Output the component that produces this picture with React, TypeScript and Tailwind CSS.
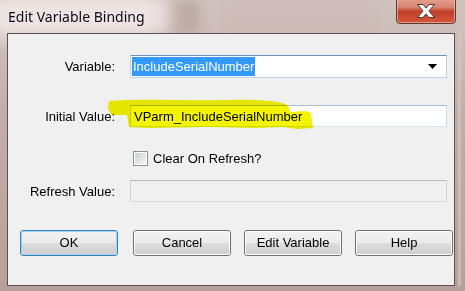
const label = 'text-[13px] text-black leading-none';
const ui = { fontFamily: '"Liberation Sans", Arial, sans-serif' };

function Button({ children, primary, className }: { children: string; primary?: boolean; className?: string }) {
  return (
    <div
      className={`relative h-[26px] w-[98px] rounded-[3px] border ${
        primary ? 'border-[#3c7fb1]' : 'border-[#707070]'
      } ${className ?? ''}`}
    >
      <div
        className={`flex h-full w-full items-center justify-center rounded-[2px] border ${
          primary ? 'border-[#9cd6f4]' : 'border-[#fcfcfc]'
        } bg-[linear-gradient(#f2f2f2_0%,#ebebeb_50%,#dddddd_50%,#cfcfcf_100%)] text-[13px] text-black`}
      >
        {children}
      </div>
    </div>
  );
}

export default function App() {
  return (
    <div
      className="relative h-[291px] w-[465px] overflow-hidden bg-[linear-gradient(180deg,#d2c3bf_0%,#c2aea8_40%,#b6a09a_100%)]"
      style={ui}
    >
      {/* blurred glass behind the frame */}
      <div className="pointer-events-none absolute left-[170px] top-0 h-[34px] w-[30px] bg-[#a8948e] opacity-50 blur-[6px]" />
      <div className="pointer-events-none absolute left-[220px] top-0 h-[34px] w-[160px] bg-[#cbb9b4] opacity-60 blur-[6px]" />
      <div className="pointer-events-none absolute left-[-20px] top-[-6px] h-[44px] w-[190px] rounded-full bg-[#f6efed] opacity-80 blur-[10px]" />

      {/* title bar */}
      <div className="relative flex h-[33px] items-start">
        <span
          className="ml-[8px] mt-[8px] text-[14px] leading-[18px] text-[#0b0b1e]"
          style={{ fontFamily: '"Noto Sans", "Open Sans", sans-serif' }}
        >
          Edit Variable Binding
        </span>
        <div className="absolute left-[396px] top-[-4px] flex h-[28px] w-[60px] items-end justify-center rounded-b-[4px] border border-[#5a3a33] bg-[linear-gradient(#e9a799_0%,#d7826f_40%,#c2402a_55%,#d6553a_100%)] pb-[4px] shadow-[inset_0_0_0_1px_rgba(255,220,210,0.5)]">
          <svg width="20" height="16" viewBox="0 0 20 16">
            <path
              d="M1.5 1.5h5.5l3 3.6 3-3.6h5.5l-5.6 6.5 5.6 6.5H13l-3-3.6-3 3.6H1.5l5.6-6.5z"
              fill="#ffffff"
              stroke="#4a3a38"
              strokeWidth="1"
              strokeLinejoin="round"
            />
          </svg>
        </div>
      </div>

      {/* client area */}
      <div className="relative ml-[7px] h-[253px] w-[448px] border border-[#5e504c] bg-[#f0f0f0]">
        <div className="flex flex-col">
          {/* Variable */}
          <div className="mt-[21px] flex items-center">
            <div className={`w-[107px] text-right ${label}`}>Variable:</div>
            <div className="ml-[15px] flex h-[23px] w-[317px] items-center border border-[#6f93b8] border-b-[#b9d3e8] border-l-[#b9d3e8] border-r-[#b9d3e8] bg-white pl-[1px] pr-[9px]">
              <span className="bg-[#3399ff] px-[1px] py-[3px] text-[13px] leading-none text-white">IncludeSerialNumber</span>
              <svg className="ml-auto" width="9" height="5" viewBox="0 0 9 5">
                <path d="M0 0h9L4.5 5z" fill="#000" />
              </svg>
            </div>
          </div>

          {/* Initial Value */}
          <div className="relative mt-[27px] flex items-center">
            <div className={`w-[107px] text-right ${label}`}>Initial Value:</div>
            <div className="ml-[15px] flex h-[22px] w-[317px] items-center border border-[#abc0d6] border-l-[#c7dbec] border-r-[#c7dbec] border-b-[#d6e5f2] bg-white pl-[3px]">
              <span className="text-[13px] leading-none text-black">VParm_IncludeSerialNumber</span>
            </div>
            {/* highlighter mark */}
            <svg
              className="pointer-events-none absolute left-[99px] top-[-7px] mix-blend-multiply"
              width="208"
              height="33"
              viewBox="0 0 208 33"
            >
              <path
                d="M2 3 C30 0 80 3 120 2 C150 1 170 3 178 6 L182 9 L183 14 L198 13 L204 15 L206 30 L190 31 L176 29 L150 30 L100 29 L40 30 L22 29 L20 17 L4 17 L1 10 Z"
                fill="#f4f400"
              />
            </svg>
          </div>

          {/* checkbox */}
          <div className="mt-[24px] flex h-[15px] items-center pl-[125px]">
            <div className="flex h-[15px] w-[15px] items-center justify-center border border-[#8e8f8f] bg-white">
              <div className="h-[11px] w-[11px] bg-[linear-gradient(135deg,#cbcfd5,#f6f6f6)]" />
            </div>
            <span className={`ml-[5px] ${label}`}>Clear On Refresh?</span>
          </div>

          {/* Refresh Value */}
          <div className="mt-[14px] flex items-center">
            <div className={`w-[107px] text-right ${label}`}>Refresh Value:</div>
            <div className="ml-[15px] h-[22px] w-[317px] border border-[#b5b9bd] border-b-[#d8dadc] border-l-[#d0d3d6] border-r-[#d0d3d6] bg-[#f0f0f0]" />
          </div>

          {/* buttons */}
          <div className="mt-[28px] flex">
            <Button primary className="ml-[12px]">OK</Button>
            <Button className="ml-[15px]">Cancel</Button>
            <Button className="ml-[13px]">Edit Variable</Button>
            <Button className="ml-[13px]">Help</Button>
          </div>
        </div>
      </div>

      {/* right frame highlight */}
      <div className="pointer-events-none absolute left-[458px] top-[30px] h-[256px] w-[3px] bg-[#d8c9c5] opacity-60" />
    </div>
  );
}
